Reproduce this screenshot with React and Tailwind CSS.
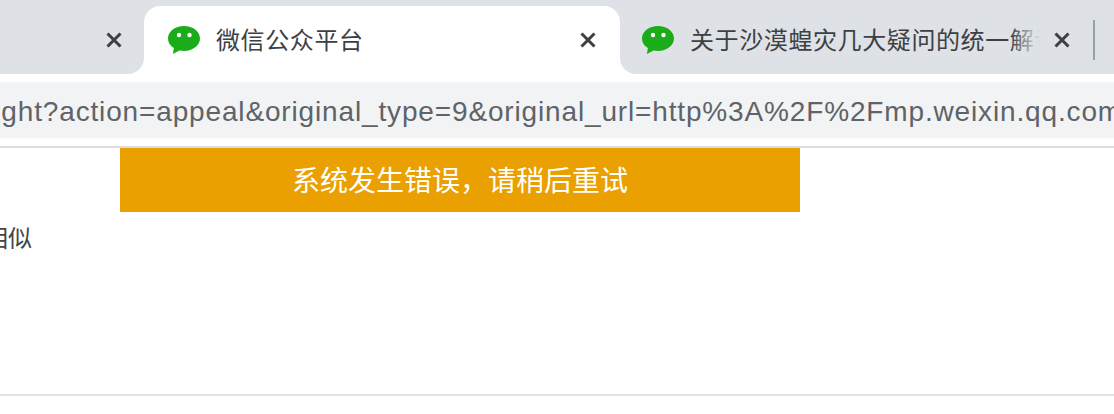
const cjk = '"Noto Sans CJK SC", "Liberation Sans", sans-serif';

const WechatIcon = () => (
  <svg width="32" height="28" viewBox="0 0 32 28" className="shrink-0">
    <path
      d="M16 0C7.2 0 0 5.4 0 12.4c0 4 2.3 7.4 5.9 9.6L4.9 28l6.6-3.6c1.4.3 2.9.5 4.5.5 8.8 0 16-5.6 16-12.5S24.8 0 16 0z"
      fill="#1aad19"
    />
    <circle cx="11" cy="9" r="2.2" fill="#fff" />
    <circle cx="21.5" cy="9" r="2.2" fill="#fff" />
  </svg>
);

const CloseIcon = () => (
  <svg width="16" height="16" viewBox="0 0 16 16" className="shrink-0">
    <path d="M1.5 1.5l13 13M14.5 1.5l-13 13" stroke="#3c4043" strokeWidth="3" fill="none" />
  </svg>
);

export default function App() {
  return (
    <div className="flex h-[414px] w-[1114px] flex-col overflow-hidden bg-white" style={{ fontFamily: cjk }}>
      {/* tab strip */}
      <div className="flex h-[74px] shrink-0">
        <div className="flex w-[144px] items-center justify-end rounded-br-2xl bg-[#dee1e6] pr-[22px] pt-[6px]">
          <CloseIcon />
        </div>
        <div className="w-[476px] bg-[#dee1e6] pt-[6px]">
          <div className="flex h-[68px] items-center rounded-t-2xl bg-white px-6">
            <WechatIcon />
            <span className="mb-[2px] ml-4 text-2xl leading-8 tracking-[0.6px] text-[#3c4043]">微信公众平台</span>
            <span className="ml-auto">
              <CloseIcon />
            </span>
          </div>
        </div>
        <div className="flex flex-1 items-center rounded-bl-2xl bg-[#dee1e6] pl-[22px] pt-[6px]">
          <WechatIcon />
          <div className="relative mb-[2px] ml-4 w-[350px] overflow-hidden whitespace-nowrap text-2xl leading-8 tracking-[0.6px] text-[#3c4043]">
            关于沙漠蝗灾几大疑问的统一解读
            <div className="absolute inset-y-0 right-0 w-[30px] bg-gradient-to-r from-[#dee1e6]/0 to-[#dee1e6]" />
          </div>
          <span className="ml-[14px]">
            <CloseIcon />
          </span>
          <div className="ml-[23px] h-10 w-[2px] bg-[#9aa0a6]" />
        </div>
      </div>

      {/* address row */}
      <div className="h-[74px] shrink-0 border-b-2 border-[#dadce0] py-2">
        <div className="flex h-14 items-center justify-end overflow-hidden bg-[#f1f3f4] pt-[3px]">
          <span
            className="-mr-[8px] whitespace-nowrap text-[28px] tracking-[0.85px] text-[#5f6368]"
            style={{ fontFamily: '"Liberation Sans", sans-serif' }}
          >
            fight?action=appeal&amp;original_type=9&amp;original_url=http%3A%2F%2Fmp.weixin.qq.com
          </span>
        </div>
      </div>

      {/* page */}
      <div className="h-[248px] shrink-0 border-b-2 border-[#e4e4e8]">
        <div className="ml-[120px] flex h-16 w-[680px] items-center justify-center bg-[#eaa000] pb-[2px] text-[28px] text-white">
          系统发生错误，请稍后重试
        </div>
        <div className="-ml-4 mt-[9px] text-2xl leading-8 text-[#444]">相似</div>
      </div>
    </div>
  );
}
